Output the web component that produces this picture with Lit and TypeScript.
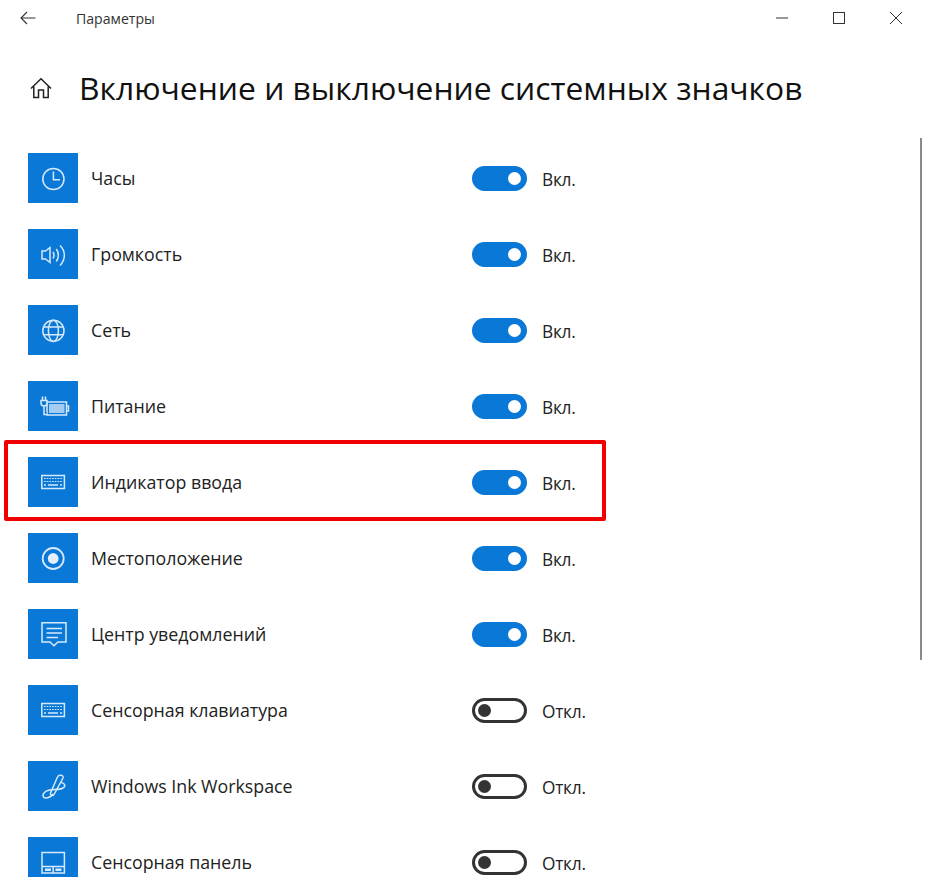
import { LitElement, html, css, svg } from "lit";
import { customElement } from "lit/decorators.js";

const s = (body: unknown) => html`<svg class="ico" viewBox="0 0 50 50" fill="none" stroke="#d6e9fa" stroke-width="1.5">${body}</svg>`;

const keyboard = (y: number) => svg`
  <rect x="13.8" y="${y}" width="22.6" height="13" />
  <path d="M16 ${y + 3}h18M16 ${y + 6}h18" stroke-width="1.2" stroke-dasharray="1.6 1.1" />
  <path d="M16 ${y + 9.5}h2M20 ${y + 9.5}h10M32 ${y + 9.5}h2" stroke-width="1.4" />`;

const icons = {
  clock: s(svg`<circle cx="25.4" cy="26" r="10.6" /><path d="M25.4 18.5V26.8H32" />`),
  volume: s(svg`
    <path d="M14 22H17.5L22 18.5V33.5L17.5 30H14Z" />
    <path d="M25 23C26.3 25 26.3 27.5 25 29.5" />
    <path d="M28.3 20C31 23.5 31 29 28.3 32.5" />
    <path d="M32 16.5C37.8 22 37.8 30.5 32 36.5" />`),
  globe: s(svg`
    <circle cx="25.4" cy="25.8" r="10.6" />
    <ellipse cx="25.4" cy="25.8" rx="5" ry="10.6" />
    <path d="M15.8 22H35M15.8 29.8H35" />`),
  power: s(svg`
    <rect x="19" y="21" width="19.5" height="13" />
    <path d="M38.5 25H40.5V30H38.5" />
    <rect x="21" y="23" width="15.5" height="9" fill="#d6e9fa" fill-opacity="0.75" stroke="none" />
    <path d="M14.5 15.5V19M17.5 15.5V19M13 19.5H19V22C19 24 17.5 25 16 25C14.5 25 13 24 13 22ZM16 25V33.5H19" fill="#0a78d7" />`),
  keyboard: s(keyboard(18.5)),
  location: s(svg`
    <circle cx="25.2" cy="25.5" r="10.5" stroke-width="1.8" />
    <circle cx="25.2" cy="25.5" r="5.4" fill="#e4f0fb" stroke="none" />`),
  action: s(svg`
    <path d="M14 13.8H38V33H30L26 36.8L22 33H14Z" />
    <path d="M18.5 19.5H34M18.5 24H34M18.5 28.5H30" />`),
  touchkb: s(keyboard(18.5)),
  ink: s(svg`
    <path d="M29.5 16C31 13 36 14 35 17L26 33.5C25 35.5 22 34.5 22.5 32Z" />
    <path d="M33 21.5C37 22 38 25 35 27C30 30 22 27 17 31C13.5 34 15 37.5 18.5 37C21 36.7 23.5 35 25 33" />`),
  touchpad: s(svg`
    <rect x="14" y="15.5" width="22.4" height="20.5" />
    <path d="M14 29.5H36.4M25.2 29.5V36" />
    <path d="M17 32.8H23M27.4 32.8H33.4" stroke-width="2.4" />`),
};

const rows: [keyof typeof icons, string, boolean][] = [
  ["clock", "Часы", true],
  ["volume", "Громкость", true],
  ["globe", "Сеть", true],
  ["power", "Питание", true],
  ["keyboard", "Индикатор ввода", true],
  ["location", "Местоположение", true],
  ["action", "Центр уведомлений", true],
  ["touchkb", "Сенсорная клавиатура", false],
  ["ink", "Windows Ink Workspace", false],
  ["touchpad", "Сенсорная панель", false],
];

@customElement("app-root")
export class AppRoot extends LitElement {
  static styles = css`
    :host {
      display: block;
      position: relative;
      height: 877px;
      overflow: hidden;
      background: #fff;
      font-family: "Open Sans", "Noto Sans", sans-serif;
      color: #1a1a1a;
    }
    .titlebar {
      display: flex;
      align-items: center;
      height: 36px;
      padding-left: 20px;
    }
    .back { width: 16px; height: 14px; }
    .app-name {
      margin-left: 40px;
      font-size: 14.1px;
      color: #333;
    }
    .controls {
      display: flex;
      margin-left: auto;
      gap: 45px;
      padding-right: 23px;
    }
    .controls svg { width: 12px; height: 12px; display: block; }
    .heading {
      display: flex;
      align-items: center;
      height: 36px;
      margin-top: 34px;
      padding-left: 30px;
    }
    .home { width: 22px; height: 22px; }
    h1 {
      margin: 0 0 0 27px;
      font-size: 31.8px;
      font-weight: 400;
      line-height: 36px;
      color: #111;
      white-space: nowrap;
    }
    .list {
      display: flex;
      flex-direction: column;
      gap: 26px;
      margin-top: 47px;
      padding-left: 28px;
    }
    .row { display: flex; align-items: center; height: 50px; }
    .tile { width: 50px; height: 50px; background: #0a78d7; flex: none; }
    .ico { display: block; width: 50px; height: 50px; }
    .name {
      width: 381px;
      margin-left: 13px;
      font-size: 17.8px;
      color: #222;
      white-space: nowrap;
    }
    .switch {
      box-sizing: border-box;
      display: flex;
      align-items: center;
      width: 55px;
      height: 25px;
      margin-top: 1px;
      border-radius: 13px;
      border: 3px solid #0a78d7;
      background: #0a78d7;
      padding: 0 3px;
      justify-content: flex-end;
    }
    .switch.off {
      background: #fff;
      border-color: #333;
      justify-content: flex-start;
    }
    .knob { width: 13px; height: 13px; border-radius: 50%; background: #fff; }
    .off .knob { background: #333; }
    .state {
      margin: 2px 0 0 15px;
      font-size: 17.3px;
      letter-spacing: -0.25px;
      color: #222;
    }
    .highlight {
      position: absolute;
      left: 4px;
      top: 440px;
      width: 602px;
      height: 81px;
      box-sizing: border-box;
      border: 4px solid #f00000;
      border-radius: 2px;
    }
    .scroll {
      position: absolute;
      left: 920px;
      top: 138px;
      width: 2px;
      height: 522px;
      background: #8a8a8a;
    }
  `;

  render() {
    return html`
      <div class="titlebar">
        <svg class="back" viewBox="0 0 16 14" fill="none" stroke="#333" stroke-width="1.1"><path d="M15.5 7H1M7 1L1 7L7 13" /></svg>
        <span class="app-name">Параметры</span>
        <div class="controls">
          <svg viewBox="0 0 12 12" fill="none" stroke="#333" stroke-width="1"><path d="M0 6H12" /></svg>
          <svg viewBox="0 0 12 12" fill="none" stroke="#333" stroke-width="1"><rect x="0.5" y="0.5" width="11" height="11" /></svg>
          <svg viewBox="0 0 12 12" fill="none" stroke="#333" stroke-width="1"><path d="M0 0L12 12M12 0L0 12" /></svg>
        </div>
      </div>
      <div class="heading">
        <svg class="home" viewBox="0 0 22 22" fill="none" stroke="#222" stroke-width="1.5">
          <path d="M1 11.5L11 1.8L21 11.5" />
          <path d="M3.8 9.5V20.5H8.5V13H13.5V20.5H18.2V9.5" />
        </svg>
        <h1>Включение и выключение системных значков</h1>
      </div>
      <div class="list">
        ${rows.map(
          ([icon, name, on]) => html`
            <div class="row">
              <div class="tile">${icons[icon]}</div>
              <div class="name">${name}</div>
              <div class="switch ${on ? "" : "off"}"><div class="knob"></div></div>
              <div class="state">${on ? "Вкл." : "Откл."}</div>
            </div>
          `
        )}
      </div>
      <div class="highlight"></div>
      <div class="scroll"></div>
    `;
  }
}
